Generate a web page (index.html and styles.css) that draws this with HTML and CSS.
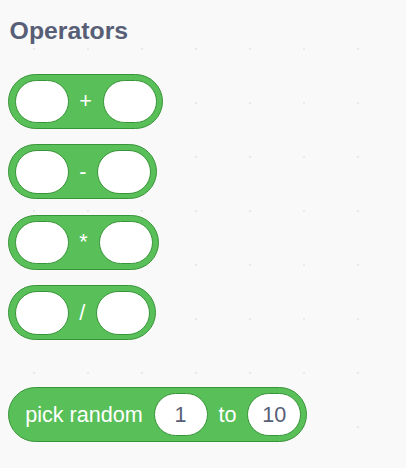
FILE: index.html
```html
<!DOCTYPE html>
<html>
<head>
<meta charset="utf-8">
<link rel="stylesheet" href="styles.css">
</head>
<body>
<div class="flyout">
  <div class="label">Operators</div>
  <div class="blocks">
    <div class="block"><span class="input"></span><span class="op">+</span><span class="input"></span></div>
    <div class="block"><span class="input"></span><span class="op">-</span><span class="input"></span></div>
    <div class="block"><span class="input"></span><span class="op">*</span><span class="input"></span></div>
    <div class="block"><span class="input"></span><span class="op">/</span><span class="input"></span></div>
  </div>
  <div class="block block-text">
    <span class="op">pick random</span>
    <span class="input">1</span>
    <span class="op">to</span>
    <span class="input">10</span>
  </div>
</div>
</body>
</html>
```
FILE: styles.css
```css
html, body {
  margin: 0;
  padding: 0;
}
body {
  width: 406px;
  height: 468px;
  overflow: hidden;
  background-color: #f9f9f9;
  background-image: radial-gradient(circle at center, #e9e9e9 0, #e9e9e9 1px, transparent 1.6px);
  background-size: 54px 54px;
  background-position: 7px 22px;
  font-family: "Liberation Sans", Arial, Helvetica, sans-serif;
}
.flyout {
  padding: 17.2px 0 0 8px;
  display: flex;
  flex-direction: column;
  align-items: flex-start;
}
.label {
  font-size: 24.8px;
  line-height: 28px;
  font-weight: bold;
  color: #575e75;
  padding-left: 1.6px;
}
.blocks {
  margin-top: 28.8px;
  display: flex;
  flex-direction: column;
  align-items: flex-start;
  gap: 15.5px;
}
.block {
  box-sizing: border-box;
  height: 55px;
  display: flex;
  align-items: center;
  gap: 10.8px;
  padding: 0 5.2px 0 5.5px;
  background: #59c059;
  border: 1.3px solid #389438;
  border-radius: 28px;
}
.block-text {
  margin-top: 46.6px;
  padding-left: 16.2px;
}
.op {
  color: #ffffff;
  font-size: 21.6px;
  line-height: 24px;
  white-space: nowrap;
}
.input {
  box-sizing: border-box;
  min-width: 54px;
  height: 43.2px;
  padding: 0 10px;
  background: #ffffff;
  border: 1px solid #389438;
  border-radius: 22px;
  display: flex;
  align-items: center;
  justify-content: center;
  color: #575e75;
  font-size: 21.6px;
}
```
